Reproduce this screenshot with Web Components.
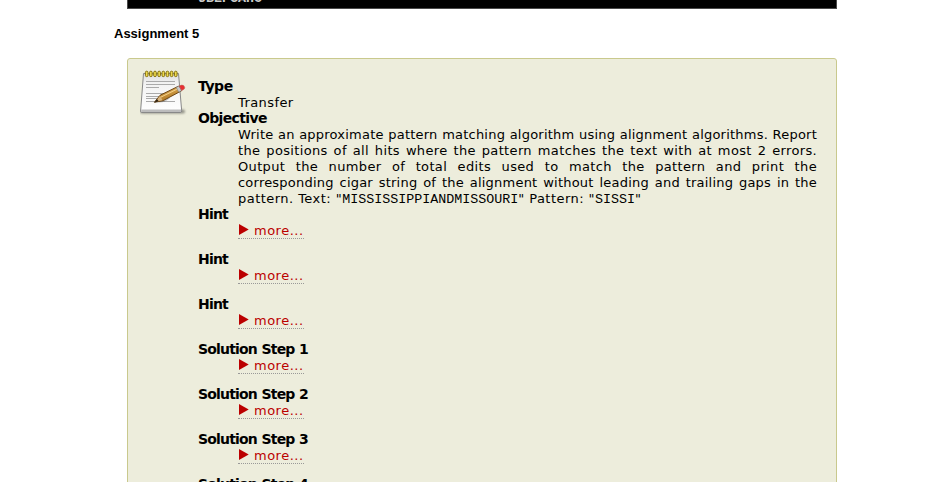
<!DOCTYPE html>
<html lang="en">
<head>
<meta charset="utf-8">
<title>Assignment 5</title>
<style>
html,body{margin:0;height:482px;overflow:hidden;background:#fff}
body{font:13px/16px "DejaVu Sans",sans-serif;color:#000}
</style>
</head>
<body>
<assignment-page></assignment-page>
<script>
class CodeBar extends HTMLElement{
  constructor(){super();this.attachShadow({mode:"open"}).innerHTML=`<style>
  :host{display:block;box-sizing:border-box;height:9px;margin-left:127px;width:710px;background:#000;border:1px solid #4a4a4a;border-top:0;overflow:hidden;color:#ccc;font:bold 13.33px/14px "Liberation Mono",monospace}
  div{margin:-8px 0 0 70px}
  </style><div><slot></slot></div>`}
}
customElements.define("code-bar",CodeBar);

class NotepadIcon extends HTMLElement{
  constructor(){super();
    let rings="";
    for(let i=0;i<8;i++)rings+=`<rect x="${5.4+i*4.15}" y="2.2" width="2.6" height="5.4" rx="1.2" fill="#edd94e" stroke="#836f0c" stroke-width="1"/>`;
    this.attachShadow({mode:"open"}).innerHTML=`<style>:host{display:block;width:48px;height:48px}svg{display:block}</style>
    <svg width="48" height="48" viewBox="0 0 48 48">
    <defs>
      <linearGradient id="p" x1="0" y1="0" x2="0" y2="1"><stop offset="0" stop-color="#dcdcdc"/><stop offset=".25" stop-color="#f2f2f2"/><stop offset="1" stop-color="#fff"/></linearGradient>
      <linearGradient id="w" x1="0" y1="0" x2=".4" y2="1"><stop offset="0" stop-color="#f2c46c"/><stop offset="1" stop-color="#a9701c"/></linearGradient>
      <filter id="b" x="-20%" y="-80%" width="140%" height="260%"><feGaussianBlur stdDeviation="1"/></filter>
    </defs>
    <rect x="0" y="40.5" width="45" height="4" rx="2" fill="#000" opacity=".38" filter="url(#b)"/>
    <path d="M3.5 4.5H38.5L41.7 42Q41.7 43.5 40 43.5H2Q.5 43.5 .6 42Z" fill="url(#p)" stroke="#888" stroke-width="1"/>
    <path d="M1.3 40.5H41L41 43H1.1Z" fill="#bcbcbc"/>
    <g stroke="#aaa" stroke-width="1"><path d="M6 12.5H35M6 15.5H35M6 18.5H19M6 24.5H35M6 27.5H26M6 29.5H21M6 32.5H35"/></g>
    ${rings}
    <path d="M15 33Q24 35 30 29L27 28Z" fill="#000" opacity=".2"/>
    <path d="M14.5 33.2L20 26.3L38.5 17.2L41.5 21.8L23.2 31.6Z" fill="url(#w)" stroke="#6b4310" stroke-width="1" stroke-linejoin="round"/>
    <path d="M20.8 28.2L38.7 19.3" stroke="#f7d48d" stroke-width="1"/>
    <path d="M15 33L20 26.9L22.6 31.2Z" fill="#d8b47d"/>
    <path d="M14 33.7L17 30L18.7 32.3Z" fill="#302415"/>
    <path d="M36.2 18.4L39 17L41.6 21.6L38.8 23.2Z" fill="#c9c9c9" stroke="#777" stroke-width=".6"/>
    <path d="M39.2 17Q42.2 15.4 43.8 16.7Q45.4 18.4 44.2 20L41.7 21.5Z" fill="#e92e32" stroke="#c05a50" stroke-width=".6"/>
    </svg>`}
}
customElements.define("notepad-icon",NotepadIcon);

class TermEntry extends HTMLElement{
  constructor(){super();this.attachShadow({mode:"open"}).innerHTML=`<style>
  :host{display:block}
  b{display:block;height:16px;line-height:14px;white-space:nowrap;font-size:14px;letter-spacing:-.82px;word-spacing:.5px}
  div{margin-left:40px;letter-spacing:.42px}
  </style><b></b><div><slot></slot></div>`}
  connectedCallback(){
    const b=this.shadowRoot.querySelector("b");
    b.textContent=this.getAttribute("term");
    if(this.hasAttribute("spacing"))b.style.letterSpacing=this.getAttribute("spacing");
  }
}
customElements.define("term-entry",TermEntry);

class MoreLink extends HTMLElement{
  constructor(){super();this.attachShadow({mode:"open"}).innerHTML=`<style>
  :host{display:block;height:29px}
  a{display:flex;box-sizing:border-box;width:66px;height:16px;border-bottom:1px dotted #999;color:#b00;white-space:nowrap;letter-spacing:.5px}
  svg{width:11px;height:11px;margin:1px 5px 0 0;flex:none}
  </style><a><svg viewBox="0 0 11 11"><path d="M1 0L10.7 5.5L1 11Z" fill="#b00"/></svg><span>more...</span></a>`}
}
customElements.define("more-link",MoreLink);

class JustifiedLine extends HTMLElement{
  constructor(){super();this.attachShadow({mode:"open"}).innerHTML=`<style>
  :host{display:block;width:579px;height:16px;white-space:nowrap;text-align:justify;text-align-last:justify;letter-spacing:.35px}
  :host([tight]){letter-spacing:.22px}
  :host([last]){text-align-last:left;letter-spacing:.46px}
  ::slotted(code){font:13.33px/14px "Liberation Mono",monospace;letter-spacing:0}
  </style><slot></slot>`}
}
customElements.define("justified-line",JustifiedLine);

class AssignmentBox extends HTMLElement{
  constructor(){super();this.attachShadow({mode:"open"}).innerHTML=`<style>
  :host{display:flex;box-sizing:border-box;margin-left:127px;width:710px;height:470px;background:#ededdc;border:1px solid #c9c98d;border-radius:3px;padding:10px 0 0 12px}
  section{margin:10px 0 0 10px;width:620px}
  </style><notepad-icon></notepad-icon><section><slot></slot></section>`}
}
customElements.define("assignment-box",AssignmentBox);

class AssignmentPage extends HTMLElement{
  constructor(){super();this.attachShadow({mode:"open"}).innerHTML=`<style>
  :host{display:block;height:482px;overflow:hidden}
  h1{margin:17px 0 0 114px;height:32px;font:bold 13px/16px "Liberation Sans",Arial,sans-serif}
  </style>
  <code-bar>UBEPGAHC</code-bar>
  <h1>Assignment 5</h1>
  <assignment-box>
    <term-entry term="Type" spacing="-.45px">Transfer</term-entry>
    <term-entry term="Objective" spacing="-.65px">
      <justified-line tight>Write an approximate pattern matching algorithm using alignment algorithms. Report</justified-line>
      <justified-line>the positions of all hits where the pattern matches the text with at most 2 errors.</justified-line>
      <justified-line>Output the number of total edits used to match the pattern and print the</justified-line>
      <justified-line tight>corresponding cigar string of the alignment without leading and trailing gaps in the</justified-line>
      <justified-line last>pattern. Text: "<code>MISSISSIPPIANDMISSOURI</code>" Pattern: "<code>SISSI</code>"</justified-line>
    </term-entry>
    <term-entry term="Hint"><more-link></more-link></term-entry>
    <term-entry term="Hint"><more-link></more-link></term-entry>
    <term-entry term="Hint"><more-link></more-link></term-entry>
    <term-entry term="Solution Step 1"><more-link></more-link></term-entry>
    <term-entry term="Solution Step 2"><more-link></more-link></term-entry>
    <term-entry term="Solution Step 3"><more-link></more-link></term-entry>
    <term-entry term="Solution Step 4"><more-link></more-link></term-entry>
  </assignment-box>`}
}
customElements.define("assignment-page",AssignmentPage);
</script>
</body>
</html>
